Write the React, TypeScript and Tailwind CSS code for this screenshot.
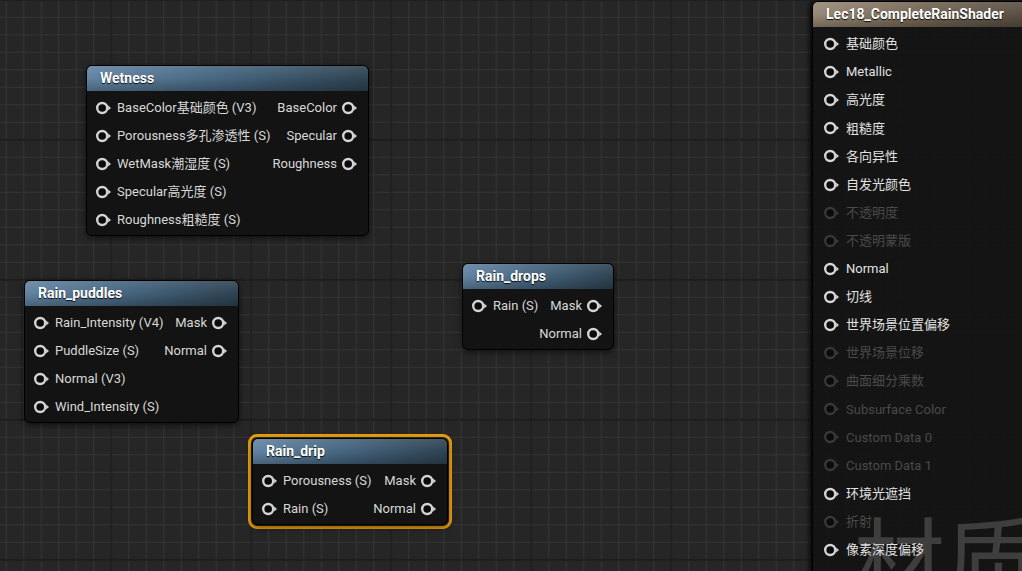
import React from 'react'

const FONT = "font-['Roboto','Noto_Sans_CJK_SC',sans-serif]"

function Pin({ dim = false }: { dim?: boolean }) {
  const c = dim ? '#383838' : '#d4d4d4'
  return (
    <svg width="16" height="14" viewBox="0 0 16 14" className="shrink-0">
      <circle cx="6.2" cy="7" r="5" fill="#0b0b0b" stroke={c} strokeWidth="2.4" />
      <path d="M12.2 4.6 L15 7 L12.2 9.4 Z" fill={c} />
    </svg>
  )
}

type NodeProps = {
  className: string
  title: string
  inputs: string[]
  outputs: string[]
}

function Node({ className, title, inputs, outputs }: NodeProps) {
  return (
    <div
      className={`rounded-[6px] border border-black bg-[#121312] shadow-[0_2px_6px_rgba(0,0,0,0.6)] ${className}`}
    >
      <div className="relative flex h-[25px] items-center rounded-t-[5px] bg-gradient-to-r from-[#6284a2] via-[#44637d] to-[#2e4352] pl-[13px]">
        <div className="absolute inset-0 rounded-t-[5px] bg-gradient-to-b from-white/10 via-transparent to-black/25" />
        <span className="relative text-[14px] font-bold text-white [text-shadow:0_1px_1px_rgba(0,0,0,0.9)]">
          {title}
        </span>
      </div>
      <div className="flex justify-between pt-[3px] pb-[1px] text-[13px] text-[#d8d8d8]">
        <div>
          {inputs.map((l) => (
            <div key={l} className="flex h-[28px] items-center gap-[5px] pl-[9px] whitespace-nowrap">
              <Pin />
              <span>{l}</span>
            </div>
          ))}
        </div>
        <div>
          {outputs.map((l) => (
            <div key={l} className="flex h-[28px] items-center justify-end gap-[5px] pr-[10px] whitespace-nowrap">
              <span>{l}</span>
              <Pin />
            </div>
          ))}
        </div>
      </div>
    </div>
  )
}

const shaderPins: [string, boolean][] = [
  ['基础颜色', true],
  ['Metallic', true],
  ['高光度', true],
  ['粗糙度', true],
  ['各向异性', true],
  ['自发光颜色', true],
  ['不透明度', false],
  ['不透明蒙版', false],
  ['Normal', true],
  ['切线', true],
  ['世界场景位置偏移', true],
  ['世界场景位移', false],
  ['曲面细分乘数', false],
  ['Subsurface Color', false],
  ['Custom Data 0', false],
  ['Custom Data 1', false],
  ['环境光遮挡', true],
  ['折射', false],
  ['像素深度偏移', true],
]

export default function App() {
  return (
    <div className={`relative h-[571px] w-[1022px] overflow-hidden bg-[#262626] ${FONT}`}>
      {/* graph grid */}
      <svg className="absolute inset-0" width="1022" height="571">
        <defs>
          <pattern id="minor" x="5.7" y="-0.7" width="17.5" height="17.5" patternUnits="userSpaceOnUse">
            <path d="M0 0.5 H17.5 M0.5 0 V17.5" stroke="#343434" strokeWidth="1.1" />
          </pattern>
          <pattern id="major" x="110.2" y="-1.2" width="140" height="140" patternUnits="userSpaceOnUse">
            <path d="M0 1 H140 M1 0 V140" stroke="#181818" strokeWidth="1.3" />
          </pattern>
        </defs>
        <rect width="1022" height="571" fill="url(#minor)" />
        <rect width="1022" height="571" fill="url(#major)" />
      </svg>

      <Node
        className="absolute left-[86px] top-[65px] w-[283px]"
        title="Wetness"
        inputs={[
          'BaseColor基础颜色 (V3)',
          'Porousness多孔渗透性 (S)',
          'WetMask潮湿度 (S)',
          'Specular高光度 (S)',
          'Roughness粗糙度 (S)',
        ]}
        outputs={['BaseColor', 'Specular', 'Roughness']}
      />

      <Node
        className="absolute left-[24px] top-[280px] w-[215px]"
        title="Rain_puddles"
        inputs={['Rain_Intensity (V4)', 'PuddleSize (S)', 'Normal (V3)', 'Wind_Intensity (S)']}
        outputs={['Mask', 'Normal']}
      />

      <Node
        className="absolute left-[462px] top-[263px] w-[152px]"
        title="Rain_drops"
        inputs={['Rain (S)']}
        outputs={['Mask', 'Normal']}
      />

      {/* selected node */}
      <div className="absolute left-[248px] top-[434px] w-[204px] rounded-[9px] border-[3px] border-[#eea00e] p-[1px]">
        <Node
          className="relative w-full"
          title="Rain_drip"
          inputs={['Porousness (S)', 'Rain (S)']}
          outputs={['Mask', 'Normal']}
        />
      </div>

      {/* material result node */}
      <div className="absolute left-[812px] top-[1px] h-[600px] w-[230px] rounded-tl-[6px] border border-black bg-[#121312]/[0.93] shadow-[-3px_0_4px_rgba(0,0,0,0.7)]">
        <div className="relative flex h-[25px] items-center rounded-tl-[5px] bg-gradient-to-r from-[#998975] via-[#726554] to-[#564b40] pl-[13px]">
          <div className="absolute inset-0 rounded-tl-[5px] bg-gradient-to-b from-white/10 via-transparent to-black/25" />
          <span className="relative text-[14px] font-bold text-white [text-shadow:0_1px_1px_rgba(0,0,0,0.9)]">
            Lec18_CompleteRainShader
          </span>
        </div>
        <div className="pointer-events-none absolute left-[40px] top-[516px] whitespace-nowrap text-[92px] leading-none text-[#3e3e3e]">
          材质
        </div>
        <div className="relative pt-[3px] text-[13px]">
          {shaderPins.map(([l, on]) => (
            <div key={l} className="flex h-[28.1px] items-center gap-[6px] pl-[11px] whitespace-nowrap">
              <Pin dim={!on} />
              <span className={on ? 'text-[#e2e2e2]' : 'text-[#4a4a4a]'}>{l}</span>
            </div>
          ))}
        </div>
      </div>
    </div>
  )
}
